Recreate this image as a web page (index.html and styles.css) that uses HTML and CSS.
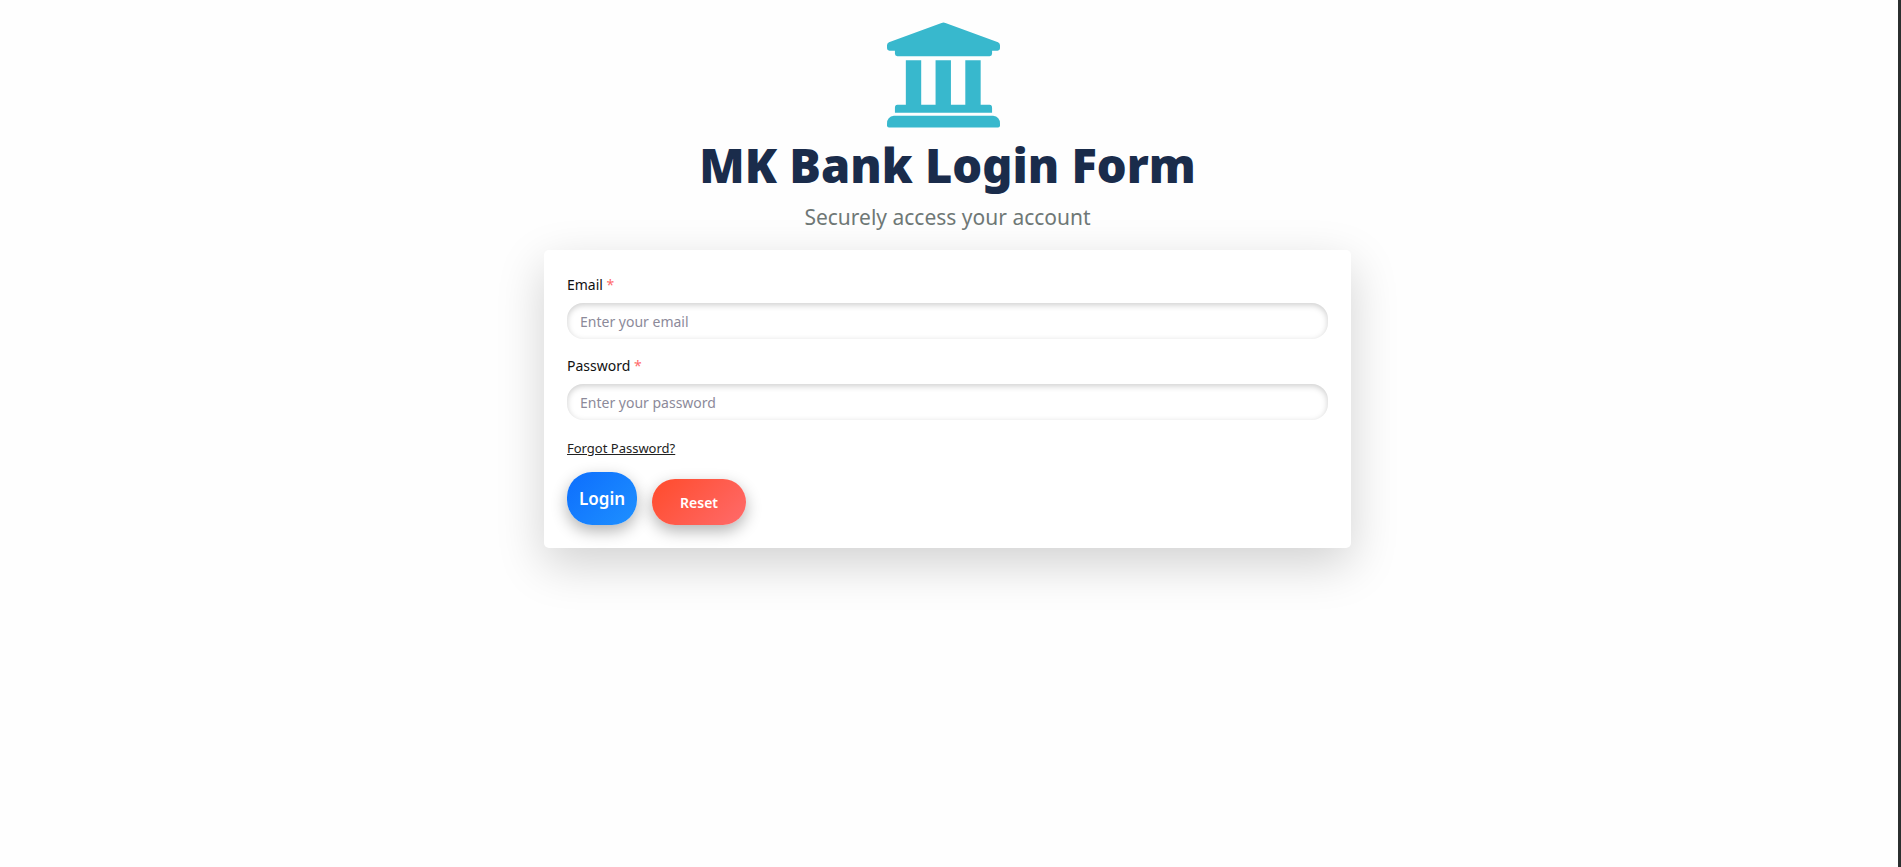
FILE: index.html
```html
<!DOCTYPE html>
<html lang="en">
<head>
  <meta charset="utf-8">
  <meta name="viewport" content="width=device-width, initial-scale=1">
  <title>MK Bank Login Form</title>
  <link rel="stylesheet" href="styles.css">
</head>
<body>
  <main class="page">
    <header class="header">
      <svg class="logo" viewBox="0 0 114 106" role="img" aria-label="Bank">
        <path d="M55 .5Q57 -.3 59 .5L112 20Q114 21 114 23V26Q114 28.500 111.500 28.500H106V31.500Q106 34 103.500 34H10.500Q8 34 8 31.500V28.500H2.500Q0 28.500 0 26V23Q0 21 2 20Z"/>
        <path d="M19 38H34.500V83H49V38H64.500V83H79V38H94.500V83H103.500Q106 83 106 86V91H8V86Q8 83 10.500 83H19Z"/>
        <path d="M7 94H107Q114 95 114 102V104Q114 106 112 106H2Q0 106 0 104V102Q0 95 7 94Z"/>
      </svg>
      <h1 class="title">MK Bank Login Form</h1>
      <p class="subtitle">Securely access your account</p>
    </header>
    <form class="card">
      <div class="field">
        <label class="label" for="email">Email <span class="required">*</span></label>
        <input class="input" id="email" type="email" placeholder="Enter your email" required>
      </div>
      <div class="field">
        <label class="label" for="password">Password <span class="required">*</span></label>
        <input class="input" id="password" type="password" placeholder="Enter your password" required>
      </div>
      <a class="forgot" href="#">Forgot Password?</a>
      <div class="actions">
        <button class="button login" type="submit">Login</button>
        <button class="button reset" type="reset">Reset</button>
      </div>
    </form>
  </main>
</body>
</html>
```
FILE: styles.css
```css
* {
  box-sizing: border-box;
}

body {
  margin: 0;
  min-height: 100vh;
  background: #fefefe;
  border-right: 3px solid #2b2f2f;
  font-family: "Segoe UI", "Noto Sans", sans-serif;
  font-size: 15px;
  line-height: 24px;
  color: #111;
}

.page {
  display: flex;
  flex-direction: column;
  align-items: center;
  padding: 22px 3px 0 0;
}

.header {
  display: flex;
  flex-direction: column;
  align-items: center;
}

.logo {
  width: 113px;
  height: 106px;
  margin-right: 7px;
  fill: #38b8cd;
}

.title {
  margin: 7px 0 0;
  font-size: 47px;
  font-weight: 900;
  line-height: 60px;
  color: #1a2c4b;
}

.subtitle {
  margin: 5px 0 16px;
  font-size: 21px;
  font-weight: 400;
  line-height: 34px;
  color: #6f7876;
}

.card {
  display: flex;
  flex-direction: column;
  align-items: flex-start;
  width: 100%;
  max-width: 807px;
  padding: 23px;
  background: #fff;
  border-radius: 5px;
  box-shadow: 0 16px 48px rgba(0, 0, 0, 0.18);
}

.field {
  display: flex;
  flex-direction: column;
  gap: 6px;
  width: 100%;
  margin-bottom: 15px;
}

.label {
  font-size: 14px;
}

.required {
  color: #ff6b6b;
}

.input {
  width: 100%;
  height: 36px;
  padding: 0 13px;
  border: 0;
  border-radius: 16px;
  background: #fff;
  box-shadow: inset 0 2px 6px rgba(0, 0, 0, 0.2);
  font: inherit;
  font-size: 14px;
  color: #111;
}

.input::placeholder {
  color: #8c8a9a;
  opacity: 1;
}

.forgot {
  margin-top: 1px;
  font-size: 13px;
  color: #222;
}

.actions {
  display: flex;
  align-items: flex-end;
  gap: 15px;
  margin-top: 12px;
}

.button {
  border: 0;
  border-radius: 25px;
  font-family: inherit;
  font-weight: 600;
  color: #fff;
  box-shadow: 0 6px 16px rgba(0, 0, 0, 0.3);
}

.login {
  height: 53px;
  padding: 0 12px;
  background: linear-gradient(135deg, #0d6efd, #1e90ff);
  font-size: 17px;
}

.reset {
  height: 46px;
  padding: 0 28px;
  background: linear-gradient(135deg, #ff4b2b, #ff6b6b);
  font-size: 14px;
}
```
